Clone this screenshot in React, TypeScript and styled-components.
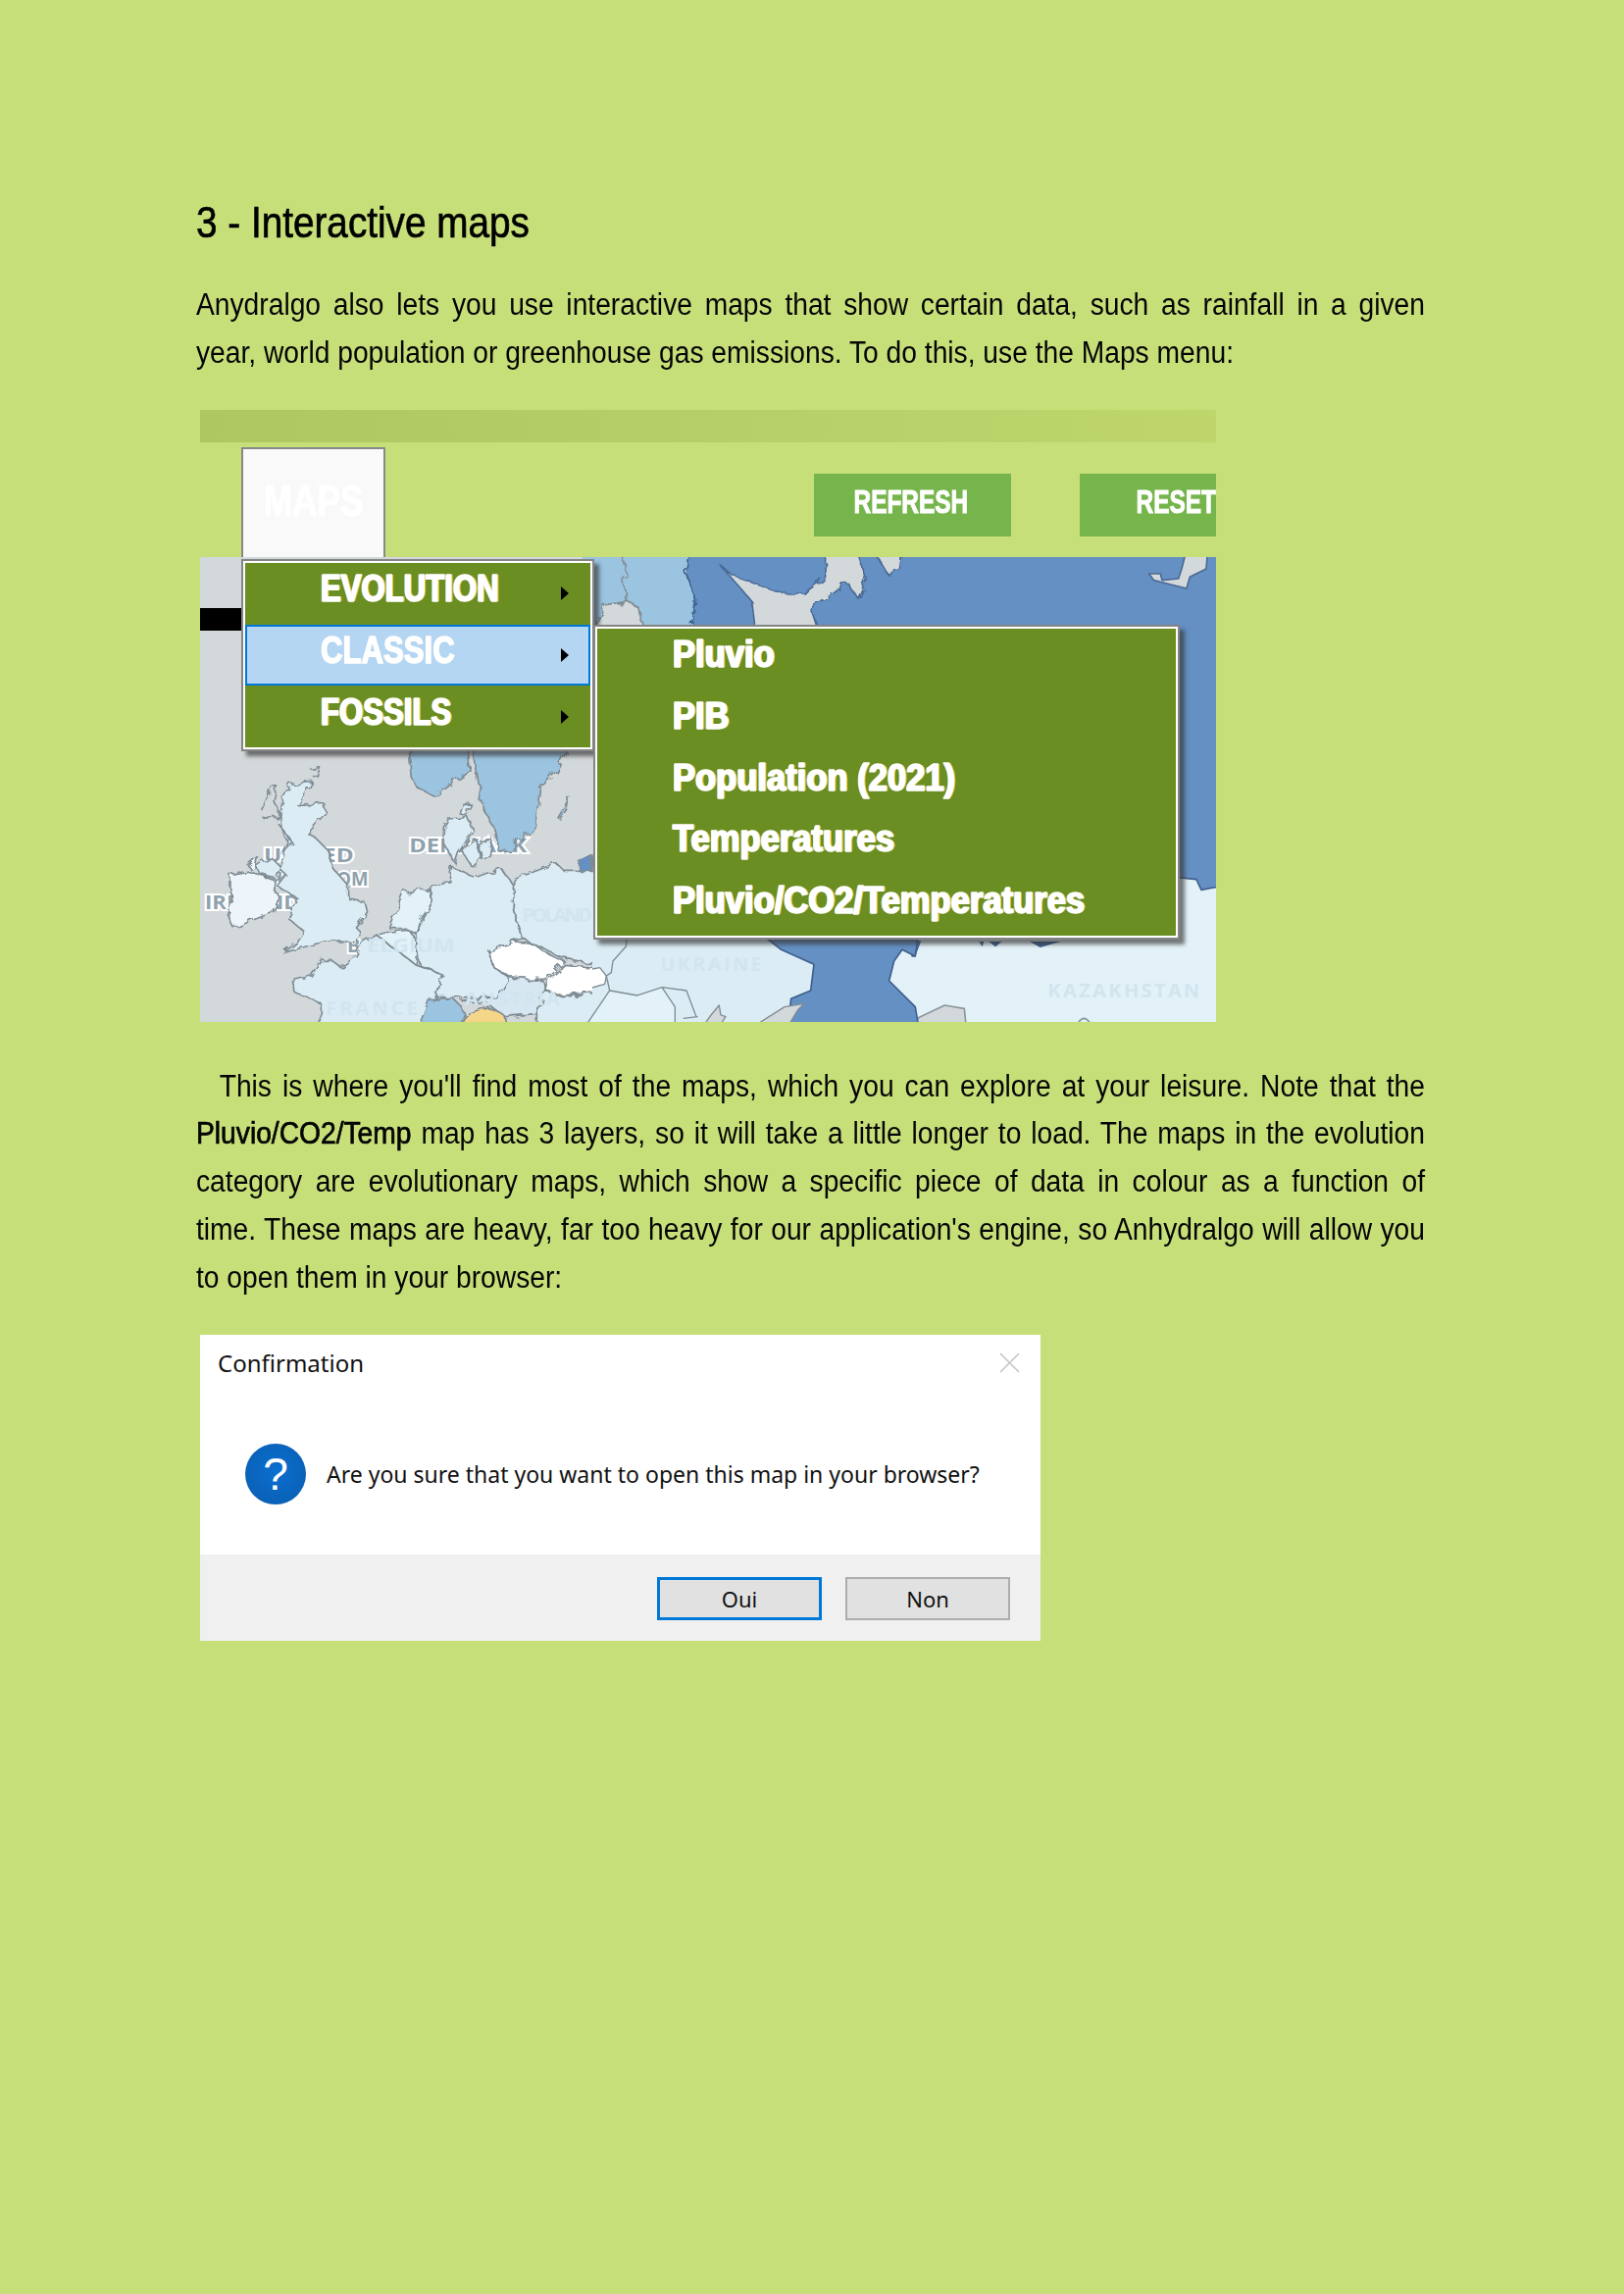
import styled, { createGlobalStyle } from "styled-components";

// the document font is a condensed face, so Liberation Sans gets squeezed
const bodyFont = `"Liberation Sans", Arial, sans-serif`;
const dialogFont = `"Noto Sans", "Open Sans", sans-serif`;

const GRAY = "#d3d8da";
const DARK = "#6590c4";
const MID = "#9bc4e0";
const LIGHT = "#dbecf5";
const PALE = "#e3f2f8";
const SHORE = "#3f5f8c";
const BORDER = "#7f8c94";

const GlobalStyle = createGlobalStyle`
  html, body {
    margin: 0;
    background: #c7df79;
  }
`;

const Page = styled.div`
  box-sizing: border-box;
  width: 1656px;
  min-height: 2339px;
  padding: 197px 203px 0 200px;
  background: #c7df79;
  color: #050505;
  font-family: ${bodyFont};
  overflow: hidden;
`;

const Heading = styled.h2`
  margin: 0 0 30px;
  font-size: 45px;
  line-height: 60px;
  font-weight: 400;
  -webkit-text-stroke: 0.7px #000;
  color: #000;
  transform: scaleX(0.86);
  transform-origin: left center;
`;

const Paragraph = styled.p`
  width: calc(100% / 0.91);
  margin: 0;
  font-size: 31px;
  line-height: 48.8px;
  transform: scaleX(0.91);
  transform-origin: left center;
`;

const Line = styled.span<{ $indent?: boolean; $last?: boolean }>`
  display: block;
  text-align: justify;
  text-align-last: ${(p) => (p.$last ? "left" : "justify")};
  padding-left: ${(p) => (p.$indent ? "26px" : "0")};
  white-space: nowrap;
`;

const Strong = styled.b`
  font-weight: 400;
  -webkit-text-stroke: 0.7px #000;
`;

const Figure = styled.div`
  width: 1036px;
  margin: 33.5px 0 41.5px 4px;
`;

const TopBar = styled.div`
  height: 33px;
  background: linear-gradient(90deg, #aec761, #bed66c);
`;

const Toolbar = styled.div`
  display: flex;
  height: 117px;
  padding-left: 42px;
  overflow: hidden;
`;

const MapsTab = styled.div`
  box-sizing: border-box;
  width: 147px;
  height: 114px;
  margin-top: 5px;
  padding-top: 28px;
  text-align: center;
  border: 2px solid #888;
  background: #f9f9f9;
  color: #fff;
  font-size: 44px;
  line-height: 50px;
  font-weight: 700;
  -webkit-text-stroke: 1px #fff;
`;

const TabLabel = styled.span`
  display: inline-block;
  transform: scaleX(0.8);
`;

const Actions = styled.div`
  display: flex;
  gap: 70px;
  margin-left: auto;
  margin-top: 32px;
`;

const ActionButton = styled.div<{ $width: number; $clip?: boolean }>`
  box-sizing: border-box;
  display: flex;
  align-items: center;
  justify-content: ${(p) => (p.$clip ? "flex-end" : "center")};
  width: ${(p) => p.$width}px;
  height: 64px;
  padding: 0 ${(p) => (p.$clip ? "0" : "4px")} 6px 0;
  background: #75b54b;
  color: #fff;
  font-size: 33px;
  font-weight: 700;
  -webkit-text-stroke: 1px #fff;
`;

const ActionLabel = styled.span<{ $clip?: boolean }>`
  display: inline-block;
  transform: scaleX(0.74);
  transform-origin: ${(p) => (p.$clip ? "right" : "center")} center;
`;

const MapArea = styled.div`
  position: relative;
  height: 474px;
`;

const MapDrawing = styled.svg`
  display: block;
  width: 1036px;
  height: 474px;
`;

const MapLabel = styled.text<{ $faint?: boolean }>`
  font-family: "Open Sans", "Liberation Sans", sans-serif;
  font-weight: 700;
  font-size: 60px;
  fill: ${(p) => (p.$faint ? "#d2e5ef" : "#8fa2ae")};
  stroke: ${(p) => (p.$faint ? "none" : "#fff")};
  stroke-width: 12px;
  paint-order: stroke;
`;

const BlackStub = styled.div`
  position: absolute;
  left: 0;
  top: 52px;
  width: 42px;
  height: 23px;
  background: #000;
`;

const MenuPanel = styled.div<{ $left: number; $top: number; $width: number }>`
  position: absolute;
  left: ${(p) => p.$left}px;
  top: ${(p) => p.$top}px;
  box-sizing: border-box;
  width: ${(p) => p.$width}px;
  border: 2px solid #858585;
  background: #6b8e23;
  outline: 2px solid #fff;
  outline-offset: -4px;
  padding: 2px;
  box-shadow: 5px 5px 4px rgba(50, 50, 50, 0.65);
`;

const MenuRow = styled.div<{ $active?: boolean }>`
  box-sizing: border-box;
  display: flex;
  align-items: center;
  height: 62.6px;
  padding: 0 20px 0 75px;
  border: 2px solid ${(p) => (p.$active ? "#0078d7" : "transparent")};
  background: ${(p) => (p.$active ? "#b5d6f2" : "transparent")};
`;

const MenuText = styled.span<{ $active?: boolean; $squeeze: number }>`
  display: inline-block;
  margin-top: -9px;
  color: #fff;
  font-size: 38px;
  font-weight: 700;
  white-space: nowrap;
  -webkit-text-stroke: 1.5px #fff;
  transform: scaleX(${(p) => p.$squeeze});
  transform-origin: left center;
  text-shadow: ${(p) =>
    p.$active ? "none" : "-1.5px 0 #bfe6ff, 2px 0 #e8c22e"};
`;

const Arrow = styled.i`
  margin-left: auto;
  width: 0;
  height: 0;
  border-left: 8px solid #000;
  border-top: 7px solid transparent;
  border-bottom: 7px solid transparent;
`;

const Dialog = styled.div`
  width: 857px;
  margin: 33px 0 0 4px;
  background: #fff;
  color: #111;
  font-family: ${dialogFont};
`;

const DialogHead = styled.div`
  display: flex;
  align-items: center;
  justify-content: space-between;
  height: 58px;
  padding: 0 21px 0 18px;
  font-size: 24px;
`;

const DialogBody = styled.div`
  box-sizing: border-box;
  display: flex;
  align-items: center;
  gap: 21px;
  height: 166px;
  padding: 2px 0 0 46px;
  font-size: 23px;
`;

const QuestionIcon = styled.div`
  display: flex;
  align-items: center;
  justify-content: center;
  flex: none;
  width: 62px;
  height: 62px;
  border-radius: 50%;
  background: radial-gradient(circle at 50% 45%, #0a6fd0, #0a5cad);
  color: #fff;
  font-family: "Liberation Sans", sans-serif;
  font-size: 46px;
`;

const DialogFooter = styled.div`
  display: flex;
  justify-content: flex-end;
  gap: 24px;
  height: 88px;
  padding: 23px 31px 0 0;
  box-sizing: border-box;
  background: #f0f0f0;
`;

const DialogButton = styled.div<{ $primary?: boolean }>`
  box-sizing: border-box;
  display: flex;
  align-items: center;
  justify-content: center;
  width: 168px;
  height: 44px;
  background: #e1e1e1;
  border: ${(p) => (p.$primary ? "3px solid #0078d7" : "2px solid #adadad")};
  font-size: 22px;
`;

const land = [
  // norway / sweden
  { d: "M640 10 L820 10 L825 75 L760 120 L715 155 L660 125 L645 90Z", fill: MID },
  { d: "M835 10 L1125 10 L1090 80 L1040 130 L1030 210 L1020 270 L970 285 L955 325 L915 325 L905 265 L860 180 L850 100Z", fill: MID },
  { d: "M1095 222 L1130 160 L1122 195 L1100 225Z", fill: MID },
  { d: "M1155 385 L1165 350 L1200 335 L1200 385Z", fill: DARK },
  // british isles
  { d: "M345 112 L275 118 L255 160 L245 215 L250 260 L270 300 L255 340 L240 375 L262 395 L235 430 L270 450 L300 470 L270 530 L320 570 L300 600 L255 635 L300 622 L400 595 L460 605 L495 575 L475 555 L512 510 L505 480 L455 470 L455 430 L410 380 L390 320 L350 280 L330 270 L385 205 L380 178 L300 185Z", fill: LIGHT },
  { d: "M90 395 L145 385 L180 395 L225 410 L240 470 L225 510 L160 535 L105 560 L85 520 L100 480 L90 440Z", fill: "#eef5fa" },
  { d: "M170 370 L215 340 L245 370 L235 405 L185 395Z", fill: LIGHT },
  { d: "M145 365 L175 340 L170 370 L155 380Z", fill: "#eef5fa" },
  // continent
  { d: "M280 720 L340 705 L370 655 L400 655 L430 680 L470 650 L490 610 L540 580 L660 670 L740 700 L725 770 L670 870 L370 870 L370 790 L290 755Z", fill: LIGHT },
  { d: "M540 580 L580 570 L640 565 L670 610 L660 670Z", fill: PALE },
  { d: "M580 560 L625 450 L700 440 L705 490 L670 540 L660 575 L620 560Z", fill: PALE },
  { d: "M705 430 L760 420 L770 370 L840 405 L920 375 L960 430 L955 490 L985 590 L885 630 L900 680 L945 710 L905 770 L800 770 L725 770 L740 700 L670 670 L660 575 L705 490Z", fill: LIGHT },
  { d: "M745 250 L760 225 L820 220 L835 260 L790 330 L780 360 L745 300Z", fill: LIGHT },
  { d: "M795 210 L805 182 L830 180 L815 215Z", fill: LIGHT },
  { d: "M800 320 L840 285 L860 340 L830 370Z", fill: LIGHT },
  { d: "M850 300 L895 285 L885 340 L860 345Z", fill: LIGHT },
  { d: "M960 410 L1090 360 L1115 385 L1260 385 L1260 680 L1110 650 L1050 620 L985 590 L955 490Z", fill: LIGHT },
  { d: "M885 630 L960 600 L1020 605 L1050 630 L1115 660 L1055 715 L960 715 L900 680Z", fill: "#fff" },
  { d: "M800 780 L905 770 L945 710 L1050 720 L1055 750 L1030 820 L930 830 L880 790Z", fill: "#d6e7f2" },
  { d: "M1055 750 L1110 770 L1260 750 L1260 870 L1030 870 L1030 825Z", fill: LIGHT },
  { d: "M1055 730 L1115 670 L1260 685 L1260 750 L1110 765 L1060 750Z", fill: "#fff" },
  { d: "M665 870 L700 780 L770 770 L800 800 L810 830 L790 870Z", fill: MID },
  { d: "M780 870 L820 820 L880 800 L930 825 L940 870Z", fill: "#f5d588" },
];

const labelsBehind = [
  { x: 195, y: 357, w: 275, text: "UNITED" },
  { x: 235, y: 428, w: 280, text: "KINGDOM" },
  { x: 15, y: 500, w: 290, text: "IRELAND" },
  { x: 640, y: 328, w: 360, text: "DENMARK" },
  { x: 450, y: 632, w: 40, text: "B" },
];

const EuropeMap = () => (
  <MapDrawing viewBox="204 568 1036 474" preserveAspectRatio="none">
    <defs>
      <filter id="coast" x="-5%" y="-5%" width="110%" height="110%">
        <feTurbulence type="fractalNoise" baseFrequency="0.035" numOctaves="2" seed="4" />
        <feDisplacementMap in="SourceGraphic" scale="26" />
      </filter>
      <clipPath id="west">
        <rect x="0" y="0" width="1206" height="880" />
      </clipPath>
    </defs>
    <rect x="204" y="568" width="1037" height="474" fill={GRAY} />

    {/* sea and the dark countries behind the submenu */}
    <rect x="700" y="540" width="560" height="430" fill={DARK} />
    <g transform="translate(600 560) scale(.3333)" strokeWidth="5" strokeLinejoin="round">
      <g filter="url(#coast)">
        <path d="M-20 0 L305 0 L295 70 L330 150 L315 240 L-20 240Z" fill={MID} />
        <path d="M305 0 L295 70 L330 150 L315 240" fill="none" stroke={SHORE} />
        <path d="M100 0 L120 80 L105 100 L120 160" fill="none" stroke={BORDER} />
        <path d="M20 240 L50 170 L120 160 L155 180 L170 240Z" fill={GRAY} stroke={BORDER} />
        <path d="M395 40 L440 80 L590 135 L660 135 L725 85 L730 0 L820 0 L850 90 L825 150 L790 100 L680 180 L700 240 L510 240 L500 160 L440 90Z" fill={GRAY} stroke="#4a6a94" />
        <path d="M870 0 L965 0 L955 65 L915 75Z" fill={GRAY} stroke="#4a6a94" />
      </g>
    </g>
    <g transform="translate(930 560) scale(.3333)" stroke="#4a6a94" strokeWidth="5" strokeLinejoin="round">
      <path d="M840 0 L905 0 L900 60 L850 85 L840 120 L780 105 L740 95 L725 75 L760 75 L765 95 L815 90 L825 60Z" fill={GRAY} />
    </g>

    <g transform="translate(204 760) scale(.3333)" clipPath="url(#west)">
      {labelsBehind.map((l) => (
        <MapLabel key={l.text} x={l.x} y={l.y} textLength={l.w} lengthAdjust="spacingAndGlyphs">
          {l.text}
        </MapLabel>
      ))}
      <g stroke={BORDER} strokeWidth="5" strokeLinejoin="round" filter="url(#coast)">
        {land.map((l) => (
          <path key={l.d} d={l.d} fill={l.fill} />
        ))}
        <path d="M335 70 L365 65 L350 100 M240 240 L285 300 L250 330 L275 280 M185 195 L215 130 L235 125 L225 170 L245 215 L225 225 L190 220" fill="none" />
      </g>
      <MapLabel $faint x="985" y="540" textLength="215">POLAND</MapLabel>
      <MapLabel $faint x="510" y="632" textLength="270" lengthAdjust="spacingAndGlyphs">ELGIUM</MapLabel>
      <MapLabel $faint x="810" y="795" textLength="290">AUSTRIA</MapLabel>
      <MapLabel $faint x="385" y="825" textLength="280">FRANCE</MapLabel>
    </g>

    {/* lower band, below the submenu */}
    <rect x="604" y="950" width="300" height="92" fill={LIGHT} />
    <rect x="880" y="890" width="361" height="152" fill={PALE} />
    <g transform="translate(930 800) scale(.3333)" strokeLinejoin="round">
      <path d="M820 0 L960 0 L960 312 L885 322 L870 290 L820 285Z" fill={DARK} />
      <path d="M820 285 L870 290 L885 322 L960 308" fill="none" stroke={SHORE} strokeWidth="5" />
      <path d="M205 480 L215 496 L220 480Z M235 480 L255 496 L275 480Z M360 480 L392 498 L455 480Z" fill={SHORE} />
      <path d="M0 480 L25 480 L8 525 L0 525Z" fill={DARK} stroke={SHORE} strokeWidth="4" />
      <path d="M0 735 L22 712 L100 675 L160 685 L165 735Z" fill={GRAY} stroke="#8a979e" strokeWidth="5" />
      <path d="M508 730 Q525 700 545 730" fill="none" stroke="#8a979e" strokeWidth="5" />
      <MapLabel $faint x="415" y="650" textLength="465">KAZAKHSTAN</MapLabel>
    </g>
    <g transform="translate(600 930) scale(.3333)" strokeLinejoin="round">
      <path d="M65 240 L150 255 L225 230 L265 290 L265 350 L-10 350Z" fill={PALE} />
      <path d="M520 60 L1010 60 L1000 135 L960 115 L935 150 L920 210 L1000 290 L1010 350 L610 350 L620 265 L680 240 L690 160 L590 115Z" fill={DARK} stroke={SHORE} strokeWidth="5" />
      <path d="M505 350 L600 290 L660 280 L640 300 L610 350Z" fill={GRAY} stroke={BORDER} strokeWidth="4" />
      <path d="M350 350 L375 315 L400 285 L405 315 L420 320 L400 350Z" fill={GRAY} stroke={BORDER} strokeWidth="4" />
      <path d="M12 174 L35 170 L55 195 L50 220 L12 231Z" fill="#fff" />
      <path d="M12 174 L35 170 L55 195 L50 220 L12 231" fill="none" stroke={BORDER} strokeWidth="4" />
      <path d="M-10 350 L65 240 L150 255 L225 230 L300 240 L330 320 M225 230 L265 290 L265 350 M290 325 L335 320 M120 60 L115 105 L75 150 L70 185 L55 195 L65 240" fill="none" stroke={BORDER} strokeWidth="4" />
      <MapLabel $faint x="220" y="180" textLength="310">UKRAINE</MapLabel>
    </g>
  </MapDrawing>
);

const categories = ["EVOLUTION", "CLASSIC", "FOSSILS"];
const classicMaps = [
  "Pluvio",
  "PIB",
  "Population (2021)",
  "Temperatures",
  "Pluvio/CO2/Temperatures",
];

export default function App() {
  return (
    <Page>
      <GlobalStyle />
      <Heading>3 - Interactive maps</Heading>
      <Paragraph>
        <Line>
          Anydralgo also lets you use interactive maps that show certain data,
          such as rainfall in a given
        </Line>
        <Line $last>
          year, world population or greenhouse gas emissions. To do this, use
          the Maps menu:
        </Line>
      </Paragraph>

      <Figure>
        <TopBar />
        <Toolbar>
          <MapsTab>
            <TabLabel>MAPS</TabLabel>
          </MapsTab>
          <Actions>
            <ActionButton $width={201}>
              <ActionLabel>REFRESH</ActionLabel>
            </ActionButton>
            <ActionButton $width={139} $clip>
              <ActionLabel $clip>RESET</ActionLabel>
            </ActionButton>
          </Actions>
        </Toolbar>
        <MapArea>
          <EuropeMap />
          <BlackStub />
          <MenuPanel $left={42} $top={2} $width={360}>
            {categories.map((name) => (
              <MenuRow key={name} $active={name === "CLASSIC"}>
                <MenuText $squeeze={0.82} $active={name === "CLASSIC"}>
                  {name}
                </MenuText>
                <Arrow />
              </MenuRow>
            ))}
          </MenuPanel>
          <MenuPanel $left={401} $top={69} $width={598}>
            {classicMaps.map((name) => (
              <MenuRow key={name}>
                <MenuText $squeeze={0.91}>{name}</MenuText>
              </MenuRow>
            ))}
          </MenuPanel>
        </MapArea>
      </Figure>

      <Paragraph>
        <Line $indent>
          This is where you'll find most of the maps, which you can explore at
          your leisure. Note that the
        </Line>
        <Line>
          <Strong>Pluvio/CO2/Temp</Strong> map has 3 layers, so it will take a
          little longer to load. The maps in the evolution
        </Line>
        <Line>
          category are evolutionary maps, which show a specific piece of data in
          colour as a function of
        </Line>
        <Line>
          time. These maps are heavy, far too heavy for our application's
          engine, so Anhydralgo will allow you
        </Line>
        <Line $last>to open them in your browser:</Line>
      </Paragraph>

      <Dialog>
        <DialogHead>
          <span>Confirmation</span>
          <svg width="21" height="21" viewBox="0 0 21 21">
            <path d="M1 1 L20 20 M20 1 L1 20" stroke="#c4c4c4" strokeWidth="1.6" />
          </svg>
        </DialogHead>
        <DialogBody>
          <QuestionIcon>?</QuestionIcon>
          <span>Are you sure that you want to open this map in your browser?</span>
        </DialogBody>
        <DialogFooter>
          <DialogButton $primary>Oui</DialogButton>
          <DialogButton>Non</DialogButton>
        </DialogFooter>
      </Dialog>
    </Page>
  );
}
